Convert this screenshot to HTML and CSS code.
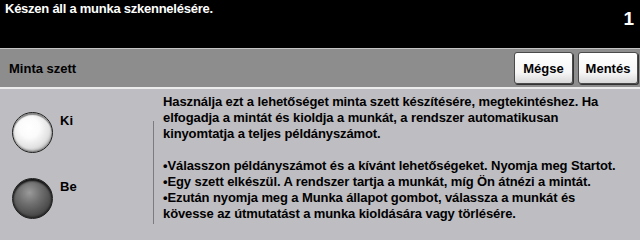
FILE: index.html
```html
<!DOCTYPE html>
<html>
<head>
<meta charset="utf-8">
<link rel="stylesheet" href="styles.css">
</head>
<body>
<div class="screen">
  <header class="status">
    <div class="status-msg">Készen áll a munka szkennelésére.</div>
    <div class="status-count">1</div>
  </header>
  <div class="toolbar">
    <div class="toolbar-title">Minta szett</div>
    <div class="toolbar-buttons">
      <button class="btn btn-cancel">Mégse</button>
      <button class="btn btn-save">Mentés</button>
    </div>
  </div>
  <main class="content">
    <div class="options">
      <div class="option">
        <span class="radio radio-off"></span>
        <span class="option-label">Ki</span>
      </div>
      <div class="option">
        <span class="radio radio-on"></span>
        <span class="option-label">Be</span>
      </div>
    </div>
    <div class="divider"></div>
    <div class="help">
      <p>Használja ezt a lehetőséget minta szett készítésére, megtekintéshez. Ha<br>elfogadja a mintát és kioldja a munkát, a rendszer automatikusan<br>kinyomtatja a teljes példányszámot.</p>
      <p>•Válasszon példányszámot és a kívánt lehetőségeket. Nyomja meg Startot.<br>•Egy szett elkészül. A rendszer tartja a munkát, míg Ön átnézi a mintát.<br>•Ezután nyomja meg a Munka állapot gombot, válassza a munkát és<br>kövesse az útmutatást a munka kioldására vagy törlésére.</p>
    </div>
  </main>
</div>
</body>
</html>
```

FILE: styles.css
```css
html, body {
  margin: 0;
  padding: 0;
}
body {
  width: 640px;
  height: 240px;
  overflow: hidden;
  font-family: "Liberation Sans", Arial, sans-serif;
  font-weight: bold;
  color: #000;
  background: #bebdc1;
}
.screen {
  display: flex;
  flex-direction: column;
  height: 240px;
}
.status {
  background: #000;
  color: #fff;
  display: flex;
  justify-content: space-between;
  align-items: flex-start;
  padding: 0 6px 0 5px;
  box-sizing: border-box;
  border-bottom: 1px solid #c4c4c4;
  height: 49px;
}
.status-msg {
  font-size: 13px;
  letter-spacing: -0.25px;
  line-height: 16px;
  margin-top: 1px;
}
.status-count {
  font-size: 19px;
  margin-top: 8px;
}
.toolbar {
  background: #8d8d8d;
  height: 38px;
  display: flex;
  justify-content: space-between;
  align-items: center;
  padding: 0 2px 0 9px;
  border-bottom: 2px solid #ececec;
}
.toolbar-title {
  font-size: 13px;
  margin-top: 1px;
}
.toolbar-buttons {
  display: flex;
  gap: 5px;
}
.btn {
  font-family: "Liberation Sans", Arial, sans-serif;
  font-weight: bold;
  font-size: 13px;
  color: #000;
  height: 32px;
  padding: 0;
  background: linear-gradient(#ffffff, #f6f6f6 65%, #d8d8d8);
  border: 1px solid #4a4a4a;
  border-radius: 3px;
  box-shadow: 1px 1px 0 #333;
}
.btn-cancel { width: 59px; }
.btn-save { width: 60px; }
.content {
  flex: 1;
  display: flex;
  padding: 5px 0 0 12px;
}
.options {
  display: flex;
  flex-direction: column;
  gap: 25px;
  width: 141px;
  padding-top: 18px;
}
.option {
  display: flex;
  align-items: flex-start;
  gap: 7px;
  height: 41px;
}
.radio {
  width: 41px;
  height: 41px;
  border-radius: 50%;
  box-sizing: border-box;
  border: 1px solid #1e1e1e;
}
.radio-off {
  background: radial-gradient(circle at 42% 38%, #ffffff 0%, #fbfbfb 30%, #e2e2e2 60%, #a8a8a8 85%, #6a6a6a 100%);
  box-shadow: inset 0 2px 1px #888, inset 0 -1px 2px #777;
}
.radio-on {
  background: radial-gradient(circle at 42% 35%, #9a9a9a 0%, #6e6e6e 35%, #484848 70%, #1a1a1a 100%);
  box-shadow: inset 0 2px 2px #111, inset 0 -1px 2px #222;
}
.option-label {
  font-size: 13px;
  margin-top: 1px;
}
.divider {
  width: 1px;
  background: #7c7c7c;
  margin-top: 27px;
  height: 103px;
  margin-right: 9px;
}
.help {
  font-size: 13px;
  letter-spacing: -0.1px;
  line-height: 16px;
  white-space: nowrap;
}
.help p {
  margin: 0 0 16px 0;
}
```
